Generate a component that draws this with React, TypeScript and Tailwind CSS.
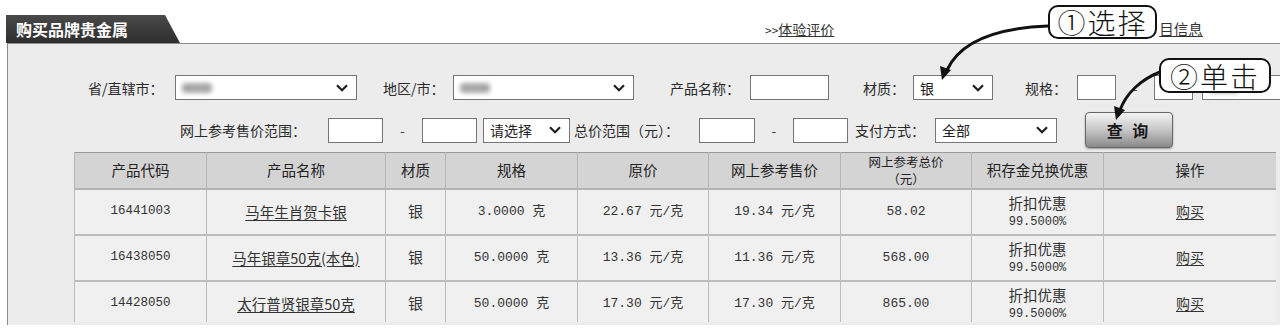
import React from 'react';

// Shared font stacks
const mono = "font-['Liberation_Mono','Noto_Sans_CJK_SC',monospace]";

interface Row {
  code: string;
  name: string;
  spec: string;
  price: string;
  online: string;
  total: string;
}

const rows: Row[] = [
  { code: '16441003', name: '马年生肖贺卡银', spec: '3.0000 克', price: '22.67 元/克', online: '19.34 元/克', total: '58.02' },
  { code: '16438050', name: '马年银章50克(本色)', spec: '50.0000 克', price: '13.36 元/克', online: '11.36 元/克', total: '568.00' },
  { code: '14428050', name: '太行普贤银章50克', spec: '50.0000 克', price: '17.30 元/克', online: '17.30 元/克', total: '865.00' },
];

const colWidths = [132, 179, 60, 132, 131, 132, 131, 132, 173];

const Chevron = () => (
  <svg width="12" height="8" viewBox="0 0 12 8" className="shrink-0">
    <polyline points="1,1.2 6,6.2 11,1.2" fill="none" stroke="#1f1f1f" strokeWidth="2.2" />
  </svg>
);

// Blurred placeholder where the screenshot hides the selected value
const Blur = () => <span className="inline-block h-[10px] w-[30px] rounded-sm bg-[#a8a8a8] blur-[2px]" />;

const Select = ({ className, children }: { className: string; children?: React.ReactNode }) => (
  <div className={`flex h-[25px] shrink-0 items-center justify-between border border-[#767676] bg-white pl-[6px] pr-[8px] text-[14px] text-[#222] ${className}`}>
    <span className="flex items-center leading-none">{children}</span>
    <Chevron />
  </div>
);

const Input = ({ className }: { className: string }) => (
  <div className={`h-[25px] shrink-0 border border-[#767676] bg-white ${className}`} />
);

const Label = ({ className, children }: { className: string; children: React.ReactNode }) => (
  <div className={`shrink-0 whitespace-nowrap text-[14px] leading-none text-[#2a2a2a] ${className}`}>{children}</div>
);

const Dash = ({ className }: { className: string }) => (
  <div className={`shrink-0 text-center text-[14px] leading-none text-[#444] ${className}`}>-</div>
);

const Callout = ({ className, children }: { className: string; children: React.ReactNode }) => (
  <div className={`absolute flex items-center justify-center rounded-[10px] border-2 border-[#111] bg-white text-[28px] font-light leading-none tracking-[2px] text-[#111] ${className}`}>
    {children}
  </div>
);

const App = () => {
  return (
    <div className="relative h-[330px] w-[1280px] overflow-hidden bg-white font-['Noto_Sans_CJK_SC',sans-serif] text-[#333]">
      {/* Title tab and links */}
      <div className="flex h-[43px] items-center pt-[15px]">
        <div className="ml-[6px] flex h-[28px] w-[174px] shrink-0 items-center bg-linear-to-b from-[#4a4a4a] to-[#2e2e2e] pl-[10px] text-[16px] font-bold text-white [clip-path:polygon(0_0,159px_0,174px_100%,0_100%)]">
          购买品牌贵金属
        </div>
        <div className="ml-[585px] shrink-0 text-[14px] leading-none text-[#333]">
          <span className="text-[12px]">&gt;&gt;</span>
          <span className="underline">体验评价</span>
        </div>
        {/* the start of this link is covered by the first callout */}
        <div className="ml-[325px] shrink-0 text-[14.5px] leading-none text-[#333]">
          <span className="underline">目信息</span>
        </div>
      </div>

      {/* Search panel */}
      <div className="ml-[7px] h-[282px] overflow-hidden border-l border-t border-[#8c8c8c] bg-[#ececec]">
        <div className="mt-[31px] flex h-[25px] items-center">
          <Label className="ml-[80px] w-[87px]">省/直辖市：</Label>
          <Select className="w-[182px]"><Blur /></Select>
          <Label className="ml-[26px] w-[70px]">地区/市：</Label>
          <Select className="w-[181px]"><Blur /></Select>
          <Label className="ml-[36px] w-[80px]">产品名称：</Label>
          <Input className="w-[79px]" />
          <Label className="ml-[34px] w-[50px]">材质：</Label>
          <Select className="w-[80px]">银</Select>
          <Label className="ml-[32px] w-[52px]">规格：</Label>
          <Input className="w-[39px]" />
          <Dash className="w-[38px]" />
          <Input className="w-[39px]" />
          <Select className="ml-[9px] w-[100px]"><Blur /></Select>
        </div>

        <div className="mt-[12px] flex h-[36px] items-center">
          <Label className="ml-[172px] w-[148px]">网上参考售价范围：</Label>
          <Input className="w-[55px]" />
          <Dash className="w-[39px]" />
          <Input className="w-[55px]" />
          <Select className="ml-[6px] w-[87px]">请选择</Select>
          <Label className="ml-[4px] w-[125px]">总价范围（元）：</Label>
          <Input className="w-[56px]" />
          <Dash className="w-[38px]" />
          <Input className="w-[55px]" />
          <Label className="ml-[7px] w-[80px]">支付方式：</Label>
          <Select className="w-[122px]">全部</Select>
          <button className="ml-[28px] flex h-[36px] w-[88px] shrink-0 items-center justify-center rounded-[4px] border border-[#666] bg-linear-to-b from-[#f4f4f4] via-[#c6c6c6] to-[#8a8a8a] text-[16px] font-bold tracking-[3px] text-[#1a1a1a] shadow-[0_1px_2px_rgba(0,0,0,0.35)]">
            查 询
          </button>
        </div>

        {/* Result table */}
        <div className="ml-[66px] mt-[4px] h-[170px] w-[1202px] overflow-hidden">
          <table className="w-[1202px] table-fixed border-collapse">
            <colgroup>
              {colWidths.map((w, i) => (
                <col key={i} style={{ width: w }} />
              ))}
            </colgroup>
            <thead>
              <tr className="h-[36px] border-t border-[#9a9a9a] bg-[#d4d4d4] text-[14.5px] text-[#222]">
                <th className="border-x border-b-2 border-[#b4b4b4] font-normal">产品代码</th>
                <th className="border-x border-b-2 border-[#b4b4b4] font-normal">产品名称</th>
                <th className="border-x border-b-2 border-[#b4b4b4] font-normal">材质</th>
                <th className="border-x border-b-2 border-[#b4b4b4] font-normal">规格</th>
                <th className="border-x border-b-2 border-[#b4b4b4] font-normal">原价</th>
                <th className="border-x border-b-2 border-[#b4b4b4] font-normal">网上参考售价</th>
                <th className="border-x border-b-2 border-[#b4b4b4] p-0 font-normal">
                  <div className="text-[12.5px] leading-[17px]">网上参考总价</div>
                  <div className="text-[12.5px] leading-[17px]">（元）</div>
                </th>
                <th className="border-x border-b-2 border-[#b4b4b4] font-normal">积存金兑换优惠</th>
                <th className="border-x border-b-2 border-[#b4b4b4] font-normal">操作</th>
              </tr>
            </thead>
            <tbody>
              {rows.map((r) => (
                <tr key={r.code} className="h-[46px] bg-[#f0f0f0] text-center text-[#333]">
                  <td className={`border-x border-b-2 border-[#bcbcbc] text-[12.5px] ${mono}`}>{r.code}</td>
                  <td className="border-x border-b-2 border-[#bcbcbc] text-[14.5px]">
                    <span className="underline underline-offset-2">{r.name}</span>
                  </td>
                  <td className="border-x border-b-2 border-[#bcbcbc] text-[15px]">银</td>
                  <td className={`border-x border-b-2 border-[#bcbcbc] text-[13px] ${mono}`}>{r.spec}</td>
                  <td className={`border-x border-b-2 border-[#bcbcbc] text-[13px] ${mono}`}>{r.price}</td>
                  <td className={`border-x border-b-2 border-[#bcbcbc] text-[13px] ${mono}`}>{r.online}</td>
                  <td className={`border-x border-b-2 border-[#bcbcbc] text-[13px] ${mono}`}>{r.total}</td>
                  <td className="border-x border-b-2 border-[#bcbcbc]">
                    <div className="text-[14.5px] leading-[20px]">折扣优惠</div>
                    <div className={`text-[12px] leading-[18px] ${mono}`}>99.5000%</div>
                  </td>
                  <td className="border-x border-b-2 border-[#bcbcbc] text-[14px]">
                    <span className="underline underline-offset-2">购买</span>
                  </td>
                </tr>
              ))}
            </tbody>
          </table>
        </div>
      </div>

      {/* Annotation callouts */}
      <Callout className="left-[1048px] top-[5px] h-[34px] w-[109px]">①选择</Callout>
      <Callout className="left-[1159px] top-[58px] h-[35px] w-[112px]">②单击</Callout>

      <svg className="pointer-events-none absolute left-0 top-0" width="1280" height="330">
        <path d="M1048 26 C 996 28 960 42 947 70" fill="none" stroke="#111" strokeWidth="3" />
        <polygon points="942,80 951,70 940,66" fill="#111" />
        <path d="M1160 72 C 1140 80 1126 94 1120 110" fill="none" stroke="#111" strokeWidth="3" />
        <polygon points="1116,120 1125,110 1114,106" fill="#111" />
      </svg>
    </div>
  );
};

export default App;
